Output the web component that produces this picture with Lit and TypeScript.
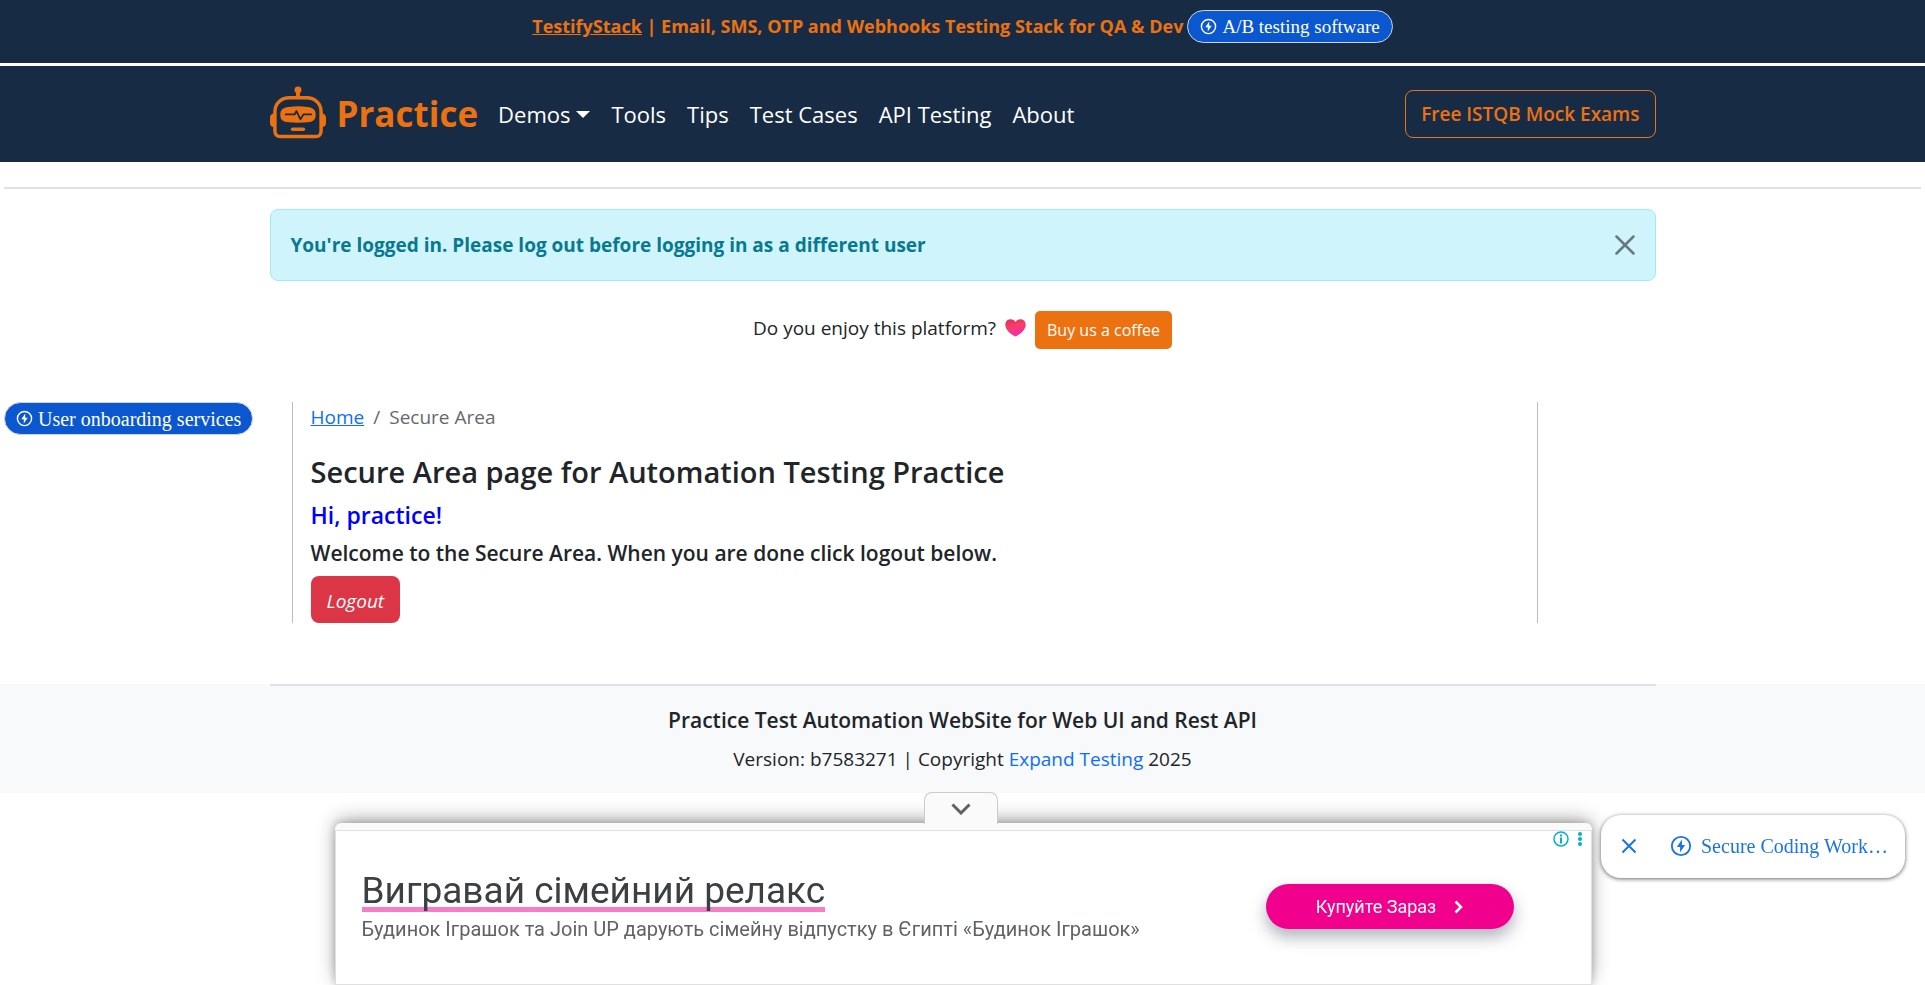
import { LitElement, html, css, svg } from "lit";
import { customElement, state } from "lit/decorators.js";

const bolt = svg`<circle cx="12" cy="12" r="10" fill="none" stroke="currentColor" stroke-width="2"/><path d="M13 5 7.500 13H11v6l5.500-8H13z" fill="currentColor"/>`;

@customElement("app-root")
export class AppRoot extends LitElement {
  @state() private alertOpen = true;

  static styles = css`
    :host {
      display: block;
      min-height: 100vh;
      background: #fff;
      color: #212529;
      font-family: "Open Sans", "Noto Sans", sans-serif;
      font-size: 19px;
      line-height: 30px;
    }
    * { box-sizing: border-box; }
    h1, h2, h3, p, ol, ul { margin: 0; padding: 0; font-weight: inherit; }
    button { font: inherit; cursor: pointer; }
    a { color: #0d6efd; }
    svg { display: block; flex: none; }
    .wrap { width: 72%; margin: 0 auto; }

    .topbar {
      display: flex;
      align-items: flex-start;
      justify-content: center;
      gap: 4px;
      padding: 10px 0 20px;
      background: #182b45;
      border-bottom: 3px solid #fff;
      color: #ec7211;
      font-size: 18px;
      font-weight: 700;
      line-height: 33px;
    }
    .topbar p a { color: inherit; }
    .pill {
      display: inline-flex;
      align-items: center;
      gap: 5px;
      height: 33px;
      padding: 0 12px;
      border: 1px solid #d0d5dc;
      border-radius: 17px;
      background: #0b57d0;
      color: #fff;
      font-family: "Liberation Serif", serif;
      font-size: 19px;
      font-weight: 400;
      text-decoration: none;
      white-space: nowrap;
    }
    .navbar { background: #182b45; }
    .navbar .wrap { display: flex; align-items: center; height: 96px; }
    .brand {
      display: flex;
      align-items: center;
      gap: 11px;
      margin-right: 20px;
      color: #ec7211;
      font-size: 35px;
      font-weight: 700;
      text-decoration: none;
    }
    .brand svg { margin-bottom: 3px; }
    .links { display: flex; gap: 21px; list-style: none; font-size: 22px; }
    .links a { display: flex; align-items: center; gap: 6px; color: #fff; text-decoration: none; }
    .caret { border: 7px solid transparent; border-top-color: #fff; border-bottom: 0; }
    .exams {
      margin-left: auto;
      padding: 8px 15px;
      border: 1px solid #ec7211;
      border-radius: 8px;
      color: #ec7211;
      font-weight: 600;
      line-height: 30px;
      text-decoration: none;
    }
    .rule { margin: 25px 4px 20px; height: 2px; border: 0; background: #dee2e6; }

    .alert {
      display: flex;
      align-items: center;
      justify-content: space-between;
      height: 72px;
      padding: 0 20px;
      border: 1px solid #9eeaf9;
      border-radius: 8px;
      background: #cff4fc;
      color: #087990;
      font-weight: 700;
    }
    .close { padding: 0; border: 0; background: none; color: #677a7e; }
    .promo { display: flex; justify-content: center; gap: 9px; margin: 30px 0 53px; line-height: 34px; }
    .promo svg { margin-top: 8px; }
    .coffee {
      height: 38px;
      padding: 0 12px;
      border: 0;
      border-radius: 5px;
      background: #ec7211;
      color: #fff;
      font-size: 16px;
    }

    .columns { display: grid; grid-template-columns: 15fr 65fr 20fr; padding: 0 4px; margin-bottom: 61px; }
    .columns aside { display: flex; align-items: flex-start; }
    .columns .pill { font-size: 20px; padding: 0 11px; }
    .content { padding: 0 18px; border: solid #bdbdbd; border-width: 0 1px; }
    .crumbs { display: flex; gap: 9px; list-style: none; color: #65696d; margin-bottom: 22px; }
    h1 { font-size: 29px; line-height: 36px; font-weight: 600; }
    .hi { margin-top: 10px; font-size: 23px; line-height: 30px; font-weight: 600; color: #00f; }
    .welcome { margin: 9px 0; font-size: 21px; line-height: 28px; font-weight: 600; }
    .logout {
      display: block;
      height: 47px;
      padding: 2px 16px 0;
      border: 0;
      border-radius: 8px;
      background: #dc3545;
      color: #fff;
      font-style: italic;
    }

    footer { background: #f8f9fb; text-align: center; padding-bottom: 19px; }
    footer .line { height: 2px; background: #dee2e6; margin-bottom: 19px; }
    footer h2 { font-size: 21px; font-weight: 600; margin-bottom: 9px; }
    footer a { text-decoration: none; }

    .ad {
      position: fixed;
      bottom: 0;
      left: 50%;
      width: 1257px;
      max-width: 100%;
      margin-left: -628px;
      border-top: 7px solid #fafafa;
      border-radius: 6px 6px 0 0;
      background: #fff;
      box-shadow: 0 -4px 20px -2px rgba(0, 0, 0, 0.4), 0 0 8px rgba(0, 0, 0, 0.2);
      font-family: Roboto, sans-serif;
    }
    .tab {
      position: absolute;
      left: 589px;
      top: -38px;
      display: grid;
      place-items: center;
      width: 74px;
      height: 32px;
      padding: 0;
      border: 1px solid #ccc;
      border-bottom: 0;
      border-radius: 8px 8px 0 0;
      background: #fafafa;
      color: #616161;
    }
    .ad-body {
      display: flex;
      align-items: center;
      justify-content: space-between;
      height: 155px;
      padding: 0 77px 2px 26px;
      border: 1px solid #e0e0e0;
    }
    .ad h2 {
      width: max-content;
      padding-top: 8px;
      color: #3c4043;
      font-size: 37px;
      line-height: 32px;
      border-bottom: 5px solid #f77dc6;
    }
    .ad p { color: #5f6368; font-size: 20px; line-height: 34px; }
    .buy {
      display: flex;
      align-items: center;
      justify-content: center;
      gap: 18px;
      width: 248px;
      height: 45px;
      border: 0;
      border-radius: 23px;
      background: #f0008c;
      color: #fff;
      font-size: 18px;
      box-shadow: 0 8px 16px rgba(60, 64, 90, 0.4);
    }
    .choices { position: absolute; top: 1px; right: 7px; display: flex; gap: 6px; color: #00aecd; }

    .suggest {
      position: fixed;
      right: 20px;
      bottom: 107px;
      display: flex;
      align-items: center;
      width: 304px;
      height: 63px;
      padding: 0 10px 2px 20px;
      border-radius: 20px;
      background: #fff;
      box-shadow: 0 1px 4px rgba(0, 0, 0, 0.6);
      color: #1a73e8;
      font-family: "Liberation Serif", serif;
      font-size: 20px;
    }
    .suggest button { padding: 0; border: 0; background: none; color: inherit; margin-right: 33px; }
    .suggest a { display: flex; align-items: center; gap: 9px; color: inherit; text-decoration: none; white-space: nowrap; }
  `;

  private pill(label: string) {
    return html`<a class="pill" href="#"><svg width="17" height="17" viewBox="0 0 24 24">${bolt}</svg>${label}</a>`;
  }

  render() {
    return html`
      <div class="topbar">
        <p><a href="#">TestifyStack</a> | Email, SMS, OTP and Webhooks Testing Stack for QA &amp; Dev</p>
        ${this.pill("A/B testing software")}
      </div>
      <nav class="navbar">
        <div class="wrap">
          <a class="brand" href="#">
            <svg width="56" height="53" viewBox="0 0 57 54" fill="none" stroke="#ec7211">
              <circle cx="28.500" cy="4" r="3.500" fill="#ec7211" stroke="none"/>
              <path d="M28.500 6v6" stroke-width="4"/>
              <path d="M20 12h17c9 0 15 6 15 14v20c0 3-2 5.500-5.500 5.500h-36C7 51.500 5 49 5 46V26c0-8 6-14 15-14z" stroke-width="3.500"/>
              <path d="M4 28c-2.500 0-4 2-4 4v6c0 2 1.500 4 4 4zM53 28c2.500 0 4 2 4 4v6c0 2-1.500 4-4 4z" fill="#ec7211" stroke="none"/>
              <path d="M19 21.500q9.500-1.500 19 0c6 .5 8.500 3 8.500 8s-2.500 7-8.500 7.500q-9.500 1-19 0c-6-.5-8.500-2.500-8.500-7.500s2.500-7.500 8.500-8z" fill="#ec7211" stroke="none"/>
              <path d="M16 29h9l2-3.500 4 8.500 3-5h8" stroke="#182b45" stroke-width="1.800" stroke-linecap="round" stroke-linejoin="round"/>
              <path d="M23 44h11" stroke-width="3.500" stroke-linecap="round"/>
            </svg>
            Practice
          </a>
          <ul class="links">
            <li><a href="#">Demos<i class="caret"></i></a></li>
            ${["Tools", "Tips", "Test Cases", "API Testing", "About"].map((t) => html`<li><a href="#">${t}</a></li>`)}
          </ul>
          <a class="exams" href="#">Free ISTQB Mock Exams</a>
        </div>
      </nav>
      <hr class="rule" />
      <div class="wrap">
        ${this.alertOpen
          ? html`<div class="alert" role="alert">
              You're logged in. Please log out before logging in as a different user
              <button class="close" aria-label="Close" @click=${() => (this.alertOpen = false)}>
                <svg width="20" height="20" viewBox="0 0 20 20" stroke="currentColor" stroke-width="2.500" stroke-linecap="round"><path d="M1.500 1.500l17 17M18.500 1.500l-17 17"/></svg>
              </button>
            </div>`
          : null}
        <div class="promo">
          <span>Do you enjoy this platform?</span>
          <svg width="21" height="18" viewBox="0 0 21 18">
            <defs><linearGradient id="heart" x1="0" y1="0" x2="0.300" y2="1"><stop offset="0" stop-color="#d8305f"/><stop offset="0.450" stop-color="#fb3d63"/><stop offset="1" stop-color="#ee2fae"/></linearGradient></defs>
            <path d="M10.500 17.500C5 15 .3 10.500.3 5.800.3 2.500 2.700.3 5.500.3c2.200 0 4 1 5 2.700 1-1.700 2.800-2.700 5-2.700 2.800 0 5.200 2.200 5.200 5.500 0 4.700-4.700 9.200-10.200 11.700z" fill="url(#heart)"/>
          </svg>
          <button class="coffee">Buy us a coffee</button>
        </div>
      </div>
      <main class="columns">
        <aside>${this.pill("User onboarding services")}</aside>
        <section class="content">
          <ol class="crumbs"><li><a href="#">Home</a></li><li>/</li><li>Secure Area</li></ol>
          <h1>Secure Area page for Automation Testing Practice</h1>
          <h2 class="hi">Hi, practice!</h2>
          <h3 class="welcome">Welcome to the Secure Area. When you are done click logout below.</h3>
          <button class="logout">Logout</button>
        </section>
      </main>
      <footer>
        <div class="wrap line"></div>
        <h2>Practice Test Automation WebSite for Web UI and Rest API</h2>
        <p>Version: b7583271 | Copyright <a href="#">Expand Testing</a> 2025</p>
      </footer>

      <div class="ad">
        <button class="tab" aria-label="Hide">
          <svg width="20" height="12" viewBox="0 0 20 12" fill="none" stroke="currentColor" stroke-width="3"><path d="M1.500 1.500 10 10l8.500-8.500"/></svg>
        </button>
        <div class="ad-body">
          <div>
            <h2>Вигравай сімейний релакс</h2>
            <p>Будинок Іграшок та Join UP дарують сімейну відпустку в Єгипті «Будинок Іграшок»</p>
          </div>
          <button class="buy">
            Купуйте Зараз
            <svg width="9" height="14" viewBox="0 0 9 14" fill="none" stroke="currentColor" stroke-width="2.500"><path d="M1.500 1.500 7 7l-5.500 5.500"/></svg>
          </button>
        </div>
        <div class="choices">
          <svg width="16" height="16" viewBox="0 0 16 16"><circle cx="8" cy="8" r="7" fill="none" stroke="currentColor" stroke-width="1.500"/><path d="M7 3.500h2v2H7zM7 6.500h2v6H7z" fill="currentColor"/></svg>
          <svg width="10" height="16" viewBox="0 0 10 16" fill="currentColor"><circle cx="5" cy="3" r="2"/><circle cx="5" cy="8" r="2"/><circle cx="5" cy="13" r="2"/></svg>
        </div>
      </div>

      <div class="suggest">
        <button aria-label="Dismiss">
          <svg width="16" height="16" viewBox="0 0 16 16" stroke="currentColor" stroke-width="2"><path d="M1.500 1.500l13 13M14.500 1.500l-13 13"/></svg>
        </button>
        <a href="#"><svg width="22" height="22" viewBox="0 0 24 24">${bolt}</svg>Secure Coding Work…</a>
      </div>
    `;
  }
}
